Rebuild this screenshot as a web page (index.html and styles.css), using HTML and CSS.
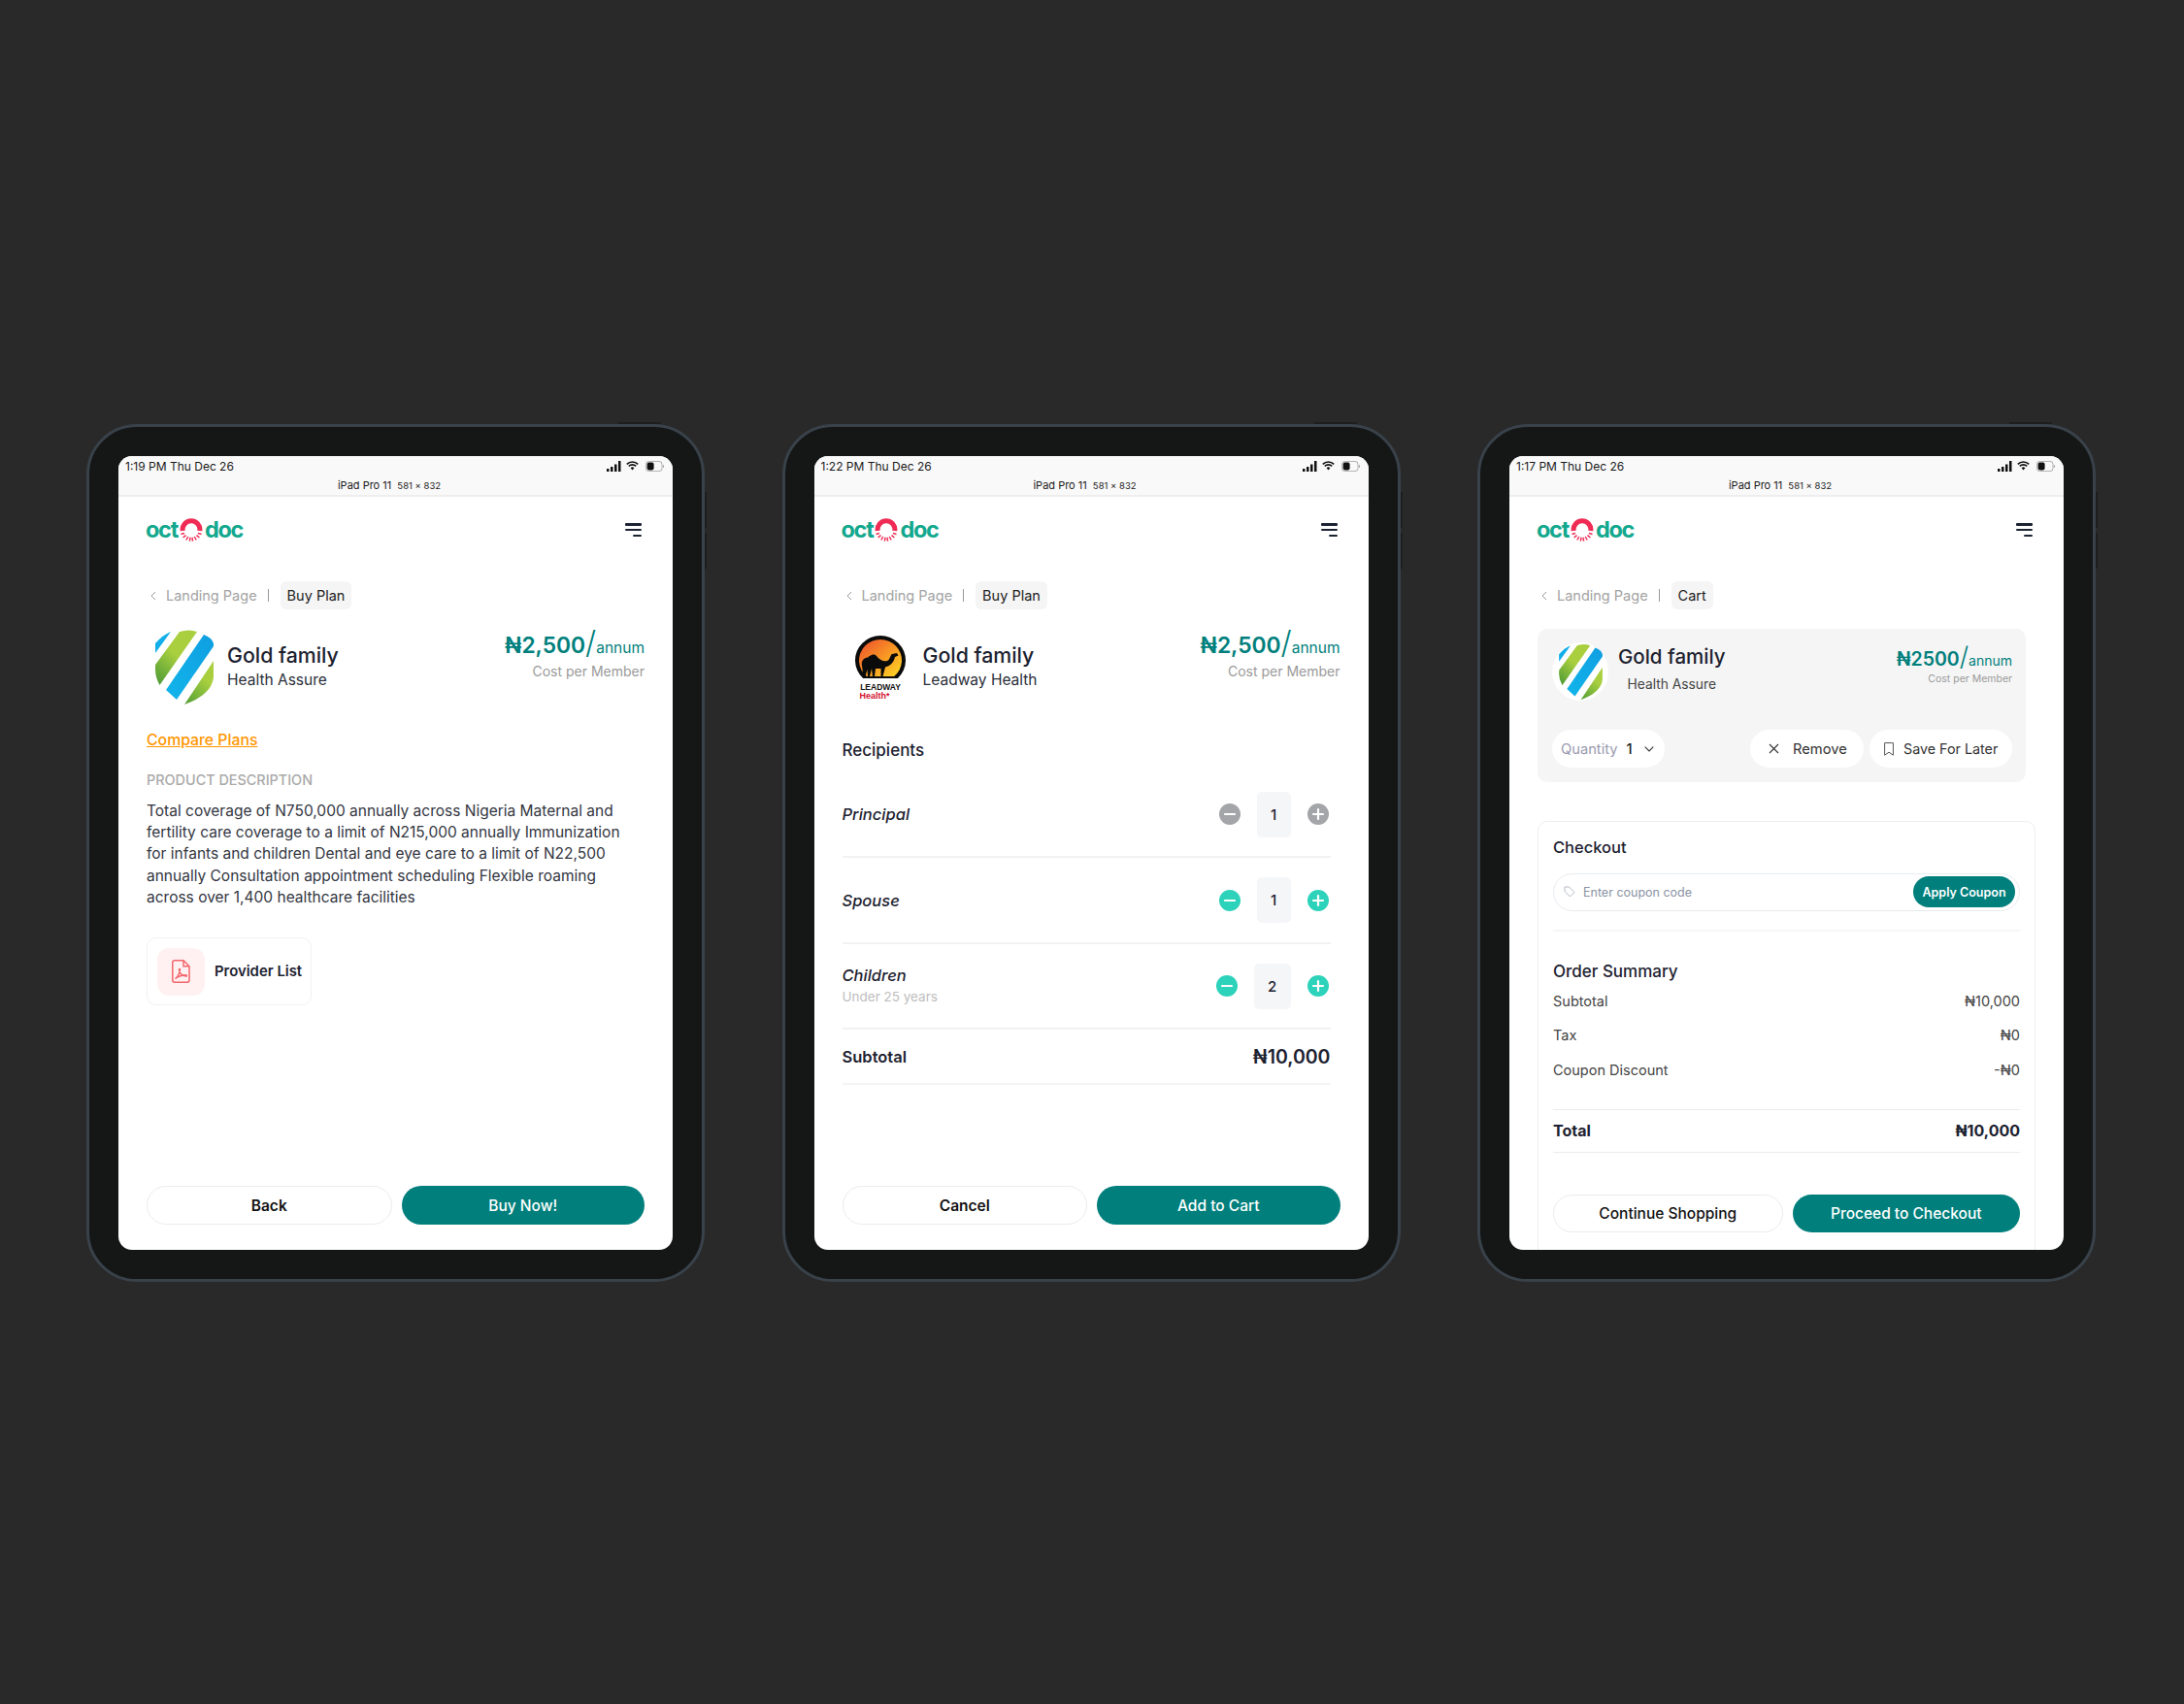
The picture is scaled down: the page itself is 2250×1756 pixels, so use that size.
FILE: index.html
```html
<!DOCTYPE html>
<html lang="en">
<head>
<meta charset="utf-8">
<title>Octodoc plan screens</title>
<link rel="stylesheet" href="styles.css">
</head>
<body>
<svg class="defs" aria-hidden="true">
  <defs>
    <linearGradient id="gs1" x1="0.8" y1="0" x2="0.1" y2="1"><stop offset="0.45" stop-color="#a9cf3f"/><stop offset="1" stop-color="#4f9c36"/></linearGradient>
    <linearGradient id="gs2" x1="0.9" y1="0" x2="0.1" y2="1"><stop offset="0" stop-color="#0f9fe2"/><stop offset="1" stop-color="#12b4ea"/></linearGradient>
    <linearGradient id="gs3" x1="0.8" y1="0" x2="0.2" y2="1"><stop offset="0.35" stop-color="#a9cf3f"/><stop offset="1" stop-color="#5aa337"/></linearGradient>
    <linearGradient id="gl" x1="0" y1="0" x2="1" y2="1"><stop offset="0.1" stop-color="#ef5a2c"/><stop offset="0.55" stop-color="#f99a24"/><stop offset="1" stop-color="#ffdb26"/></linearGradient>
    <symbol id="shield" viewBox="0 0 60 79">
      <path d="M0 15 Q8 6 16 3 L0 25 Z" fill="#12aeea"/>
      <path d="M25 3 Q35 0 43 3 L4.5 58 Q0 50 0 42 L0 37 Z" fill="url(#gs1)"/>
      <path d="M50 6 Q58 9 60 15 L60 18 L22 73 L11 63 Z" fill="url(#gs2)"/>
      <path d="M60 33 L60 50 Q58 68 30 78 Z" fill="url(#gs3)"/>
    </symbol>
    <symbol id="mark" viewBox="0 0 24 24">
      <path d="M3.2 13 A8.9 8.9 0 1 1 20.8 13" fill="none" stroke="#ef2b55" stroke-width="5"/>
      <path d="M5 15.5 L1.5 16.5 M6.5 17.6 L3.6 20 M8.8 19 L6.8 22.5 M11 19.8 L10.4 23.6 M13 19.8 L13.6 23.6 M15.2 19 L17.2 22.5 M17.5 17.6 L20.4 20 M19 15.5 L22.5 16.5" fill="none" stroke="#ef2b55" stroke-width="1.5"/>
    </symbol>
    <symbol id="signal" viewBox="0 0 15 11">
      <path d="M0 8h2.5v3H0zM4 6h2.5v5H4zM8 3.5h2.5V11H8zM12 0h2.5v11H12z" fill="#111"/>
    </symbol>
    <symbol id="wifi" viewBox="0 0 13 10">
      <path d="M0.8 3.4 A8 8 0 0 1 12.2 3.4 M2.8 5.4 A5.2 5.2 0 0 1 10.2 5.4" fill="none" stroke="#111" stroke-width="1.6"/>
      <path d="M4.6 7.2 A2.7 2.7 0 0 1 8.4 7.2 L6.5 9.6 Z" fill="#111"/>
    </symbol>
    <symbol id="battery" viewBox="0 0 19 11">
      <rect x="0.4" y="0.4" width="16.6" height="10.2" rx="3" fill="none" stroke="#999" stroke-width="0.8"/>
      <rect x="1.6" y="1.6" width="7" height="7.8" rx="1.8" fill="#111"/>
      <path d="M18 4v3c.7-.2 1-.9 1-1.5S18.700 4.200 18 4z" fill="#999"/>
    </symbol>
    <symbol id="chev" viewBox="0 0 6 10">
      <path d="M5 1 L1 5 L5 9" fill="none" stroke="#999" stroke-width="1"/>
    </symbol>
    <symbol id="minus" viewBox="0 0 22 22">
      <circle cx="11" cy="11" r="11" fill="currentColor"/><path d="M6 11h10" stroke="#fff" stroke-width="2.2" stroke-linecap="round"/>
    </symbol>
    <symbol id="plus" viewBox="0 0 22 22">
      <circle cx="11" cy="11" r="11" fill="currentColor"/><path d="M6 11h10M11 6v10" stroke="#fff" stroke-width="2.2" stroke-linecap="round"/>
    </symbol>
  </defs>
</svg>

<main class="stage">

  <section class="device">
    <span class="hw hw-top"></span><span class="hw hw-r1"></span><span class="hw hw-r2"></span>
    <div class="screen">
      <header class="status">
        <div class="status-row"><span class="time">1:19 PM Thu Dec 26</span><span class="sys"><svg class="i-signal"><use href="#signal"/></svg><svg class="i-wifi"><use href="#wifi"/></svg><svg class="i-batt"><use href="#battery"/></svg></span></div>
        <div class="viewport">iPad Pro 11 <small>581 x 832</small></div>
      </header>
      <div class="body">
        <div class="topbar">
          <div class="logo">oct<svg class="logo-mark"><use href="#mark"/></svg>doc</div>
          <div class="menu"><span></span><span></span><span class="short"></span></div>
        </div>
        <nav class="crumbs"><svg class="chev"><use href="#chev"/></svg><span class="crumb-link">Landing Page</span><span class="pipe"></span><span class="pill">Buy Plan</span></nav>
        <div class="plan">
          <div class="brand"><svg class="plan-logo"><use href="#shield"/></svg>
            <div class="names"><h2>Gold family</h2><p>Health Assure</p></div></div>
          <div class="price"><div class="amt"><span class="num">₦2,500</span><span class="slash">/</span><span class="per">annum</span></div><div class="cost">Cost per Member</div></div>
        </div>
        <a class="compare">Compare Plans</a>
        <h3 class="desc-head">PRODUCT DESCRIPTION</h3>
        <p class="desc">Total coverage of N750,000 annually across Nigeria Maternal and<br>fertility care coverage to a limit of N215,000 annually Immunization<br>for infants and children Dental and eye care to a limit of N22,500<br>annually Consultation appointment scheduling Flexible roaming<br>across over 1,400 healthcare facilities</p>
        <div class="provider"><span class="pdf"><svg class="pdf-icon" viewBox="0 0 19 24"><path d="M3 .8h9l6 6V21a2.200 2.200 0 0 1-2.200 2.200H3A2.200 2.200 0 0 1 .8 21V3A2.200 2.200 0 0 1 3 .8zM12 .8v6h6" fill="none" stroke="#f4666c" stroke-width="1.500"/><path d="M3.500 19.500c2-1 4-4.500 5-9 .3-1.500-1.300-1.500-1 0 .6 3 3 6 7 6.500 1.300.2 1.300-1.300 0-1.300-3.500 0-7.500 1.300-11 3.800z" fill="none" stroke="#f4666c" stroke-width="1.400"/></svg></span><b>Provider List</b></div>
        <div class="actions"><button class="btn ghost">Back</button><button class="btn solid">Buy Now!</button></div>
      </div>
    </div>
  </section>

  <section class="device">
    <span class="hw hw-top"></span><span class="hw hw-r1"></span><span class="hw hw-r2"></span>
    <div class="screen">
      <header class="status">
        <div class="status-row"><span class="time">1:22 PM Thu Dec 26</span><span class="sys"><svg class="i-signal"><use href="#signal"/></svg><svg class="i-wifi"><use href="#wifi"/></svg><svg class="i-batt"><use href="#battery"/></svg></span></div>
        <div class="viewport">iPad Pro 11 <small>581 x 832</small></div>
      </header>
      <div class="body">
        <div class="topbar">
          <div class="logo">oct<svg class="logo-mark"><use href="#mark"/></svg>doc</div>
          <div class="menu"><span></span><span></span><span class="short"></span></div>
        </div>
        <nav class="crumbs"><svg class="chev"><use href="#chev"/></svg><span class="crumb-link">Landing Page</span><span class="pipe"></span><span class="pill">Buy Plan</span></nav>
        <div class="plan">
          <div class="brand">
            <svg class="plan-logo" viewBox="0 0 60 79">
              <path d="M12.100 51 A26 25.500 0 1 1 47.900 51 Z" fill="#0b0b0b"/>
              <path d="M15.900 49 A22 21.500 0 1 1 44.100 49 Z" fill="url(#gl)"/>
              <path d="M11 38C10 33 13 30 17 29.500C20 27 23 25 26 28C29 32 33 34 37 33C40 32 40 27 42 26L47 25L48.500 27.500L45 29C44 34 41 38 35 39.500L32.500 49L30.500 49L30.500 41L25 41L24 49L22 49L21 41L19 49L17 49L16.500 42L14.500 49L12.500 49Z" fill="#0b0b0b"/>
              <text class="lw-a" x="30" y="63" text-anchor="middle">LEADWAY</text>
              <text class="lw-b" x="8.500" y="72">Health*</text>
            </svg>
            <div class="names"><h2>Gold family</h2><p>Leadway Health</p></div></div>
          <div class="price"><div class="amt"><span class="num">₦2,500</span><span class="slash">/</span><span class="per">annum</span></div><div class="cost">Cost per Member</div></div>
        </div>
        <h3 class="section-head recipients-head">Recipients</h3>
        <div class="recipients">
          <div class="row-r"><div class="who"><em>Principal</em></div><div class="stepper off"><svg class="step"><use href="#minus"/></svg><span class="qty">1</span><svg class="step"><use href="#plus"/></svg></div></div>
          <div class="row-r"><div class="who"><em>Spouse</em></div><div class="stepper"><svg class="step"><use href="#minus"/></svg><span class="qty">1</span><svg class="step"><use href="#plus"/></svg></div></div>
          <div class="row-r"><div class="who"><em>Children</em><span>Under 25 years</span></div><div class="stepper"><svg class="step"><use href="#minus"/></svg><span class="qty wide">2</span><svg class="step"><use href="#plus"/></svg></div></div>
          <div class="row-sub"><b>Subtotal</b><strong>₦10,000</strong></div>
        </div>
        <div class="actions"><button class="btn ghost">Cancel</button><button class="btn solid">Add to Cart</button></div>
      </div>
    </div>
  </section>

  <section class="device">
    <span class="hw hw-top"></span><span class="hw hw-r1"></span><span class="hw hw-r2"></span>
    <div class="screen">
      <header class="status">
        <div class="status-row"><span class="time">1:17 PM Thu Dec 26</span><span class="sys"><svg class="i-signal"><use href="#signal"/></svg><svg class="i-wifi"><use href="#wifi"/></svg><svg class="i-batt"><use href="#battery"/></svg></span></div>
        <div class="viewport">iPad Pro 11 <small>581 x 832</small></div>
      </header>
      <div class="body">
        <div class="topbar">
          <div class="logo">oct<svg class="logo-mark"><use href="#mark"/></svg>doc</div>
          <div class="menu"><span></span><span></span><span class="short"></span></div>
        </div>
        <nav class="crumbs"><svg class="chev"><use href="#chev"/></svg><span class="crumb-link">Landing Page</span><span class="pipe"></span><span class="pill">Cart</span></nav>
        <div class="cart-item">
          <div class="cart-top">
            <span class="oval"><svg class="oval-logo"><use href="#shield"/></svg></span>
            <div class="cart-names"><h2>Gold family</h2><p>Health Assure</p></div>
            <div class="price small"><div class="amt"><span class="num">₦2500</span><span class="slash">/</span><span class="per">annum</span></div><div class="cost">Cost per Member</div></div>
          </div>
          <div class="cart-bottom">
            <div class="chip qty-chip"><span class="q-label">Quantity</span><span class="q-val">1</span><svg class="q-chev" viewBox="0 0 10 6"><path d="M.7 .7 L5 5 L9.300 .7" fill="none" stroke="#333" stroke-width="1.100"/></svg></div>
            <div class="chip-group">
              <div class="chip rem"><svg class="x-icon" viewBox="0 0 11 11"><path d="M1 1l9 9M10 1l-9 9" stroke="#333" stroke-width="1.100"/></svg>Remove</div>
              <div class="chip save"><svg class="bm-icon" viewBox="0 0 10 14"><path d="M.6 .6h8.800v12.600L5 10.200 .6 13.200z" fill="none" stroke="#555" stroke-width="1"/></svg>Save For Later</div>
            </div>
          </div>
        </div>
        <div class="checkout">
          <h3 class="section-head">Checkout</h3>
          <div class="coupon">
            <svg class="tag" viewBox="0 0 12 12"><path d="M1 1h4.500l5.500 5.500L6.500 11 1 5.500z" fill="none" stroke="#aab2bd" stroke-width="0.900"/></svg>
            <span class="ph">Enter coupon code</span>
            <button class="apply">Apply Coupon</button>
          </div>
          <hr class="soft">
          <h3 class="section-head summary-head">Order Summary</h3>
          <div class="sum-rows">
            <div class="sum"><span>Subtotal</span><span>₦10,000</span></div>
            <div class="sum"><span>Tax</span><span>₦0</span></div>
            <div class="sum"><span>Coupon Discount</span><span>-₦0</span></div>
          </div>
          <div class="total"><b>Total</b><b>₦10,000</b></div>
          <div class="actions cart-actions"><button class="btn ghost">Continue Shopping</button><button class="btn solid">Proceed to Checkout</button></div>
        </div>
      </div>
    </div>
  </section>

</main>
</body>
</html>
```

FILE: styles.css
```css
* { box-sizing: border-box; }
html, body { margin: 0; height: 100%; }
body {
  background: #292929;
  font-family: "Inter", "Liberation Sans", sans-serif;
  color: #1d2230;
  overflow: hidden;
}
.defs { position: absolute; width: 0; height: 0; }
h2, h3, p { margin: 0; }

.stage { display: flex; gap: 79.5px; padding: 437px 0 0 89px; }

.device {
  position: relative;
  flex: none;
  width: 637px;
  height: 884px;
  padding: 30px;
  border: 3px solid #39424a;
  border-radius: 52px;
  background: #141716;
}
.hw { position: absolute; background: #1c1e1f; }
.hw-top { top: -5px; right: 42px; width: 44px; height: 2px; }
.hw-r1 { right: -5px; top: 67px; width: 2px; height: 37px; }
.hw-r2 { right: -5px; top: 109px; width: 2px; height: 37px; }

.screen {
  display: flex;
  flex-direction: column;
  width: 571px;
  height: 818px;
  border-radius: 14px;
  overflow: hidden;
  background: #fff;
}
.status {
  flex: none;
  height: 42px;
  background: #f9f9f9;
  border-bottom: 2px solid #eee;
  color: #1a1a1a;
}
.status-row {
  display: flex;
  justify-content: space-between;
  align-items: center;
  height: 20px;
  padding: 0 9px 0 7px;
  font-size: 12px;
}
.sys { display: flex; align-items: center; gap: 5px; }
.i-signal { width: 15px; height: 11px; }
.i-wifi { width: 13px; height: 10px; margin-right: 2px; }
.i-batt { width: 19px; height: 11px; }
.viewport { height: 20px; line-height: 20px; text-align: center; font-size: 11px; padding-right: 13px; }
.viewport small { font-size: 9.500px; margin-left: 3px; }

.body {
  flex: 1;
  min-height: 0;
  display: flex;
  flex-direction: column;
  padding: 0 29px 26px;
}

.topbar { flex: none; display: flex; justify-content: space-between; align-items: center; height: 68px; padding-right: 3px; }
.logo {
  display: flex;
  align-items: center;
  margin-left: -1px;
  color: #13a88e;
  font-size: 23.500px;
  font-weight: 700;
  letter-spacing: -1.300px;
  line-height: 24px;
}
.logo-mark { width: 24px; height: 24px; margin: 0 2px 0 2px; }
.menu { display: flex; flex-direction: column; align-items: flex-end; gap: 3.250px; width: 17px; }
.menu span { display: block; width: 17px; height: 2.500px; border-radius: 1px; background: #1c2333; }
.menu .short { width: 9px; }

.crumbs { flex: none; display: flex; align-items: center; height: 29px; margin-top: 19px; font-size: 14.500px; }
.chev { width: 6px; height: 10px; margin-left: 4px; }
.crumb-link { margin-left: 10px; color: #a3a3a3; }
.pipe { width: 1px; height: 13px; margin: 0 12px 0 11px; background: #999; }
.pill { padding: 0 7px; line-height: 29px; border-radius: 6px; background: #f5f5f5; color: #222; }

.plan { flex: none; display: flex; justify-content: space-between; margin-top: 20px; height: 79px; }
.brand { display: flex; gap: 14px; margin-left: 9px; }
.plan-logo { width: 60px; height: 79px; }
.lw-a { font-family: "Liberation Sans", sans-serif; font-size: 8.500px; font-weight: 700; fill: #111; }
.lw-b { font-family: "Liberation Sans", sans-serif; font-size: 9px; font-weight: 700; fill: #d3122f; }
.names { padding-top: 13px; }
.names h2 { font-size: 21.300px; font-weight: 500; line-height: 28px; color: #1d2230; }
.cart-names h2 { font-size: 20.500px; font-weight: 500; line-height: 28px; color: #1d2230; }
.names p { font-size: 15.500px; line-height: 24px; color: #2b2f3a; }

.price { text-align: right; }
.amt { display: flex; align-items: baseline; justify-content: flex-end; height: 36px; margin-top: -4px; line-height: 36px; color: #007f7c; }
.num { font-size: 22.800px; font-weight: 600; }
.slash { font-size: 32px; font-weight: 300; }
.per { font-size: 15.500px; }
.cost { margin-top: 2px; font-size: 14px; line-height: 20px; color: #9a9a9a; }

.compare { flex: none; margin-top: 25px; font-size: 15.800px; font-weight: 500; line-height: 22px; color: #ff9500; text-decoration: underline; }
.desc-head { flex: none; margin-top: 20px; font-size: 14.400px; font-weight: 500; line-height: 20px; color: #aaa; }
.desc { flex: none; margin-top: 11px; font-size: 15.500px; line-height: 22.200px; color: #33363f; white-space: nowrap; }
.provider {
  flex: none;
  display: flex;
  align-items: center;
  gap: 10px;
  width: 170px;
  height: 70px;
  margin-top: 30px;
  padding-left: 10px;
  border: 1px solid #f2f2f2;
  border-radius: 10px;
  font-size: 14.900px;
  white-space: nowrap;
}
.provider b { font-weight: 600; }
.pdf { display: flex; align-items: center; justify-content: center; width: 49px; height: 49px; border-radius: 12px; background: #fff1f1; }
.pdf-icon { width: 19px; height: 24px; }

.actions { flex: none; display: flex; gap: 10px; margin-top: auto; }
.btn {
  flex: 1;
  height: 40px;
  padding: 0;
  border-radius: 20px;
  font-family: inherit;
  font-size: 15.500px;
  font-weight: 500;
}
.ghost { background: #fff; border: 1.500px solid #ececec; color: #111; font-weight: 600; }
.solid { background: #007f7c; border: 0; color: #fff; }

.section-head { flex: none; font-size: 16.500px; font-weight: 500; line-height: 24px; color: #1d2230; }
.recipients-head { margin-top: 34px; font-size: 17px; }
.recipients { flex: none; margin: 10.750px 10px 0 0; }
.row-r {
  display: flex;
  justify-content: space-between;
  align-items: center;
  height: 88.500px;
  padding-right: 2px;
  border-bottom: 2px solid #f2f2f2;
}
.who em { display: block; font-size: 16.500px; font-weight: 500; line-height: 22px; }
.who span { display: block; font-size: 13.500px; line-height: 22px; color: #bdbdbd; }
.stepper { display: flex; align-items: center; gap: 17px; color: #2dd2bb; }
.stepper.off { color: #a3a5a8; }
.step { width: 22px; height: 22px; }
.qty { width: 35px; height: 47px; line-height: 47px; text-align: center; border-radius: 5px; background: #f5f6f8; font-size: 15px; font-weight: 500; color: #1d2230; }
.qty.wide { width: 38px; }
.row-sub { display: flex; justify-content: space-between; align-items: center; height: 56.500px; border-bottom: 2px solid #f4f4f4; }
.row-sub b { font-size: 16.500px; font-weight: 600; }
.row-sub strong { font-size: 19.500px; font-weight: 600; }

.cart-item {
  flex: none;
  width: 503px;
  height: 158px;
  margin-top: 20px;
  padding: 14px 14px 15px 15px;
  border-radius: 10px;
  background: #f5f5f5;
}
.cart-top { display: flex; height: 60px; }
.oval { display: flex; align-items: center; justify-content: center; flex: none; width: 58px; height: 60px; border-radius: 50%; background: #fff; }
.oval-logo { width: 45px; height: 59px; }
.cart-names { margin-left: 10px; padding-top: 1px; text-align: center; }
.cart-names p { margin-top: 3px; font-size: 13.800px; line-height: 22px; color: #444; }
.price.small { margin-left: auto; }
.small .amt { height: 30px; line-height: 30px; margin-top: 0; }
.small .num { font-size: 19.500px; }
.small .slash { font-size: 27px; }
.small .per { font-size: 14px; }
.small .cost { margin-top: 0; font-size: 10.500px; line-height: 16px; }
.cart-bottom { display: flex; justify-content: space-between; margin-top: 30px; }
.chip-group { display: flex; gap: 6px; }
.chip { display: flex; align-items: center; height: 39px; border-radius: 20px; background: #fff; font-size: 14.700px; color: #333; white-space: nowrap; }
.qty-chip { width: 116px; padding-left: 9px; }
.q-label { color: #9a9ab0; }
.q-val { margin-left: 9px; font-weight: 500; color: #222; }
.q-chev { width: 10px; height: 6px; margin-left: 12px; }
.rem { width: 117px; padding-left: 19px; gap: 14px; }
.x-icon { width: 11px; height: 11px; }
.save { width: 147px; padding-left: 15px; gap: 10px; font-size: 14.300px; }
.bm-icon { width: 10px; height: 14px; }

.checkout {
  flex: none;
  margin-top: 40px;
  padding: 14px 15px 40px;
  border: 1px solid #eeeeee;
  border-radius: 10px;
}
.coupon {
  display: flex;
  align-items: center;
  height: 38.500px;
  margin-top: 15px;
  padding: 0 4px 0 10px;
  border: 1px solid #e8ecf0;
  border-radius: 20px;
}
.tag { flex: none; width: 12px; height: 12px; }
.ph { margin-left: 8px; font-size: 12.500px; color: #8a93a3; }
.apply {
  margin-left: auto;
  width: 105px;
  height: 32px;
  padding: 0;
  border: 0;
  border-radius: 16px;
  background: #007f7c;
  color: #fff;
  font-family: inherit;
  font-size: 12.500px;
  font-weight: 600;
}
.soft { height: 2px; margin: 19px 0 0; border: 0; background: #f6f6f6; }
.summary-head { margin-top: 29px; font-size: 17px; }
.sum-rows { display: flex; flex-direction: column; gap: 13.500px; margin-top: 8px; }
.sum { display: flex; justify-content: space-between; font-size: 14.500px; line-height: 22px; color: #444; }
.total {
  display: flex;
  justify-content: space-between;
  align-items: center;
  height: 45px;
  margin-top: 29px;
  border-top: 1px solid #e9edf1;
  border-bottom: 1px solid #e9edf1;
  font-size: 16px;
}
.total b { font-weight: 700; }
.cart-actions { margin-top: 43px; }
.cart-actions .btn { height: 39px; }
.cart-actions .ghost { font-weight: 500; }
```
